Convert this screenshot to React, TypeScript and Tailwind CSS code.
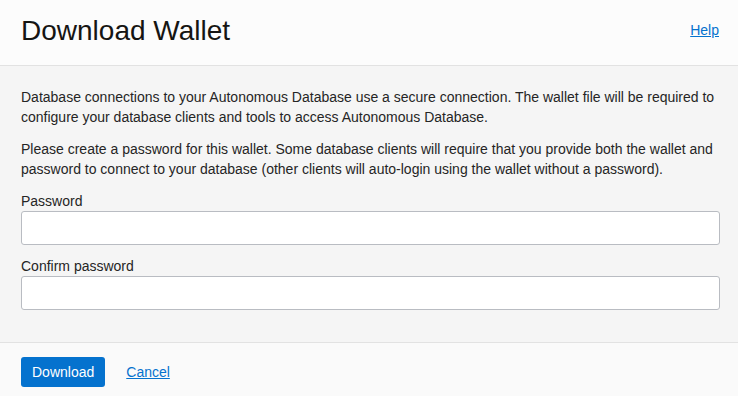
export default function App() {
  return (
    <div className="w-[738px] h-[396px] flex flex-col bg-[#f5f5f5] text-[#252525] font-['Liberation_Sans',Arial,sans-serif]">
      <header className="h-[66px] shrink-0 flex items-start justify-between pl-[21px] pr-[19px] pt-[15px] bg-[#fcfcfc] border-b border-[#e2e2e2]">
        <h1 className="text-[28px] leading-[31px] text-[#161513]">Download Wallet</h1>
        <a href="#" className="mt-[5px] text-[14px] leading-[20px] text-[#0572ce] underline">
          Help
        </a>
      </header>

      <main className="flex-1 pl-[21px] pr-[18px] pt-[21px] text-[14px] leading-[20px]">
        <p>
          Database connections to your Autonomous Database use a secure connection. The wallet file will be required to
          configure your database clients and tools to access Autonomous Database.
        </p>
        <p className="mt-[12px]">
          Please create a password for this wallet. Some database clients will require that you provide both the wallet and
          password to connect to your database (other clients will auto-login using the wallet without a password).
        </p>
        <label className="block mt-[12px]">Password</label>
        <input type="password" className="block w-full h-[34px] bg-white border border-[#b9bcc2] rounded-[3px]" />
        <label className="block mt-[11px]">Confirm password</label>
        <input type="password" className="block w-full h-[34px] bg-white border border-[#b9bcc2] rounded-[3px]" />
      </main>

      <footer className="h-[54px] shrink-0 flex items-start gap-[21px] px-[21px] pt-[14px] bg-[#fafafa] border-t border-[#e2e2e2] text-[14px]">
        <button className="h-[30px] px-[11px] rounded-[3px] bg-[#0572ce] text-white">Download</button>
        <a href="#" className="leading-[30px] text-[#0572ce] underline">
          Cancel
        </a>
      </footer>
    </div>
  );
}
